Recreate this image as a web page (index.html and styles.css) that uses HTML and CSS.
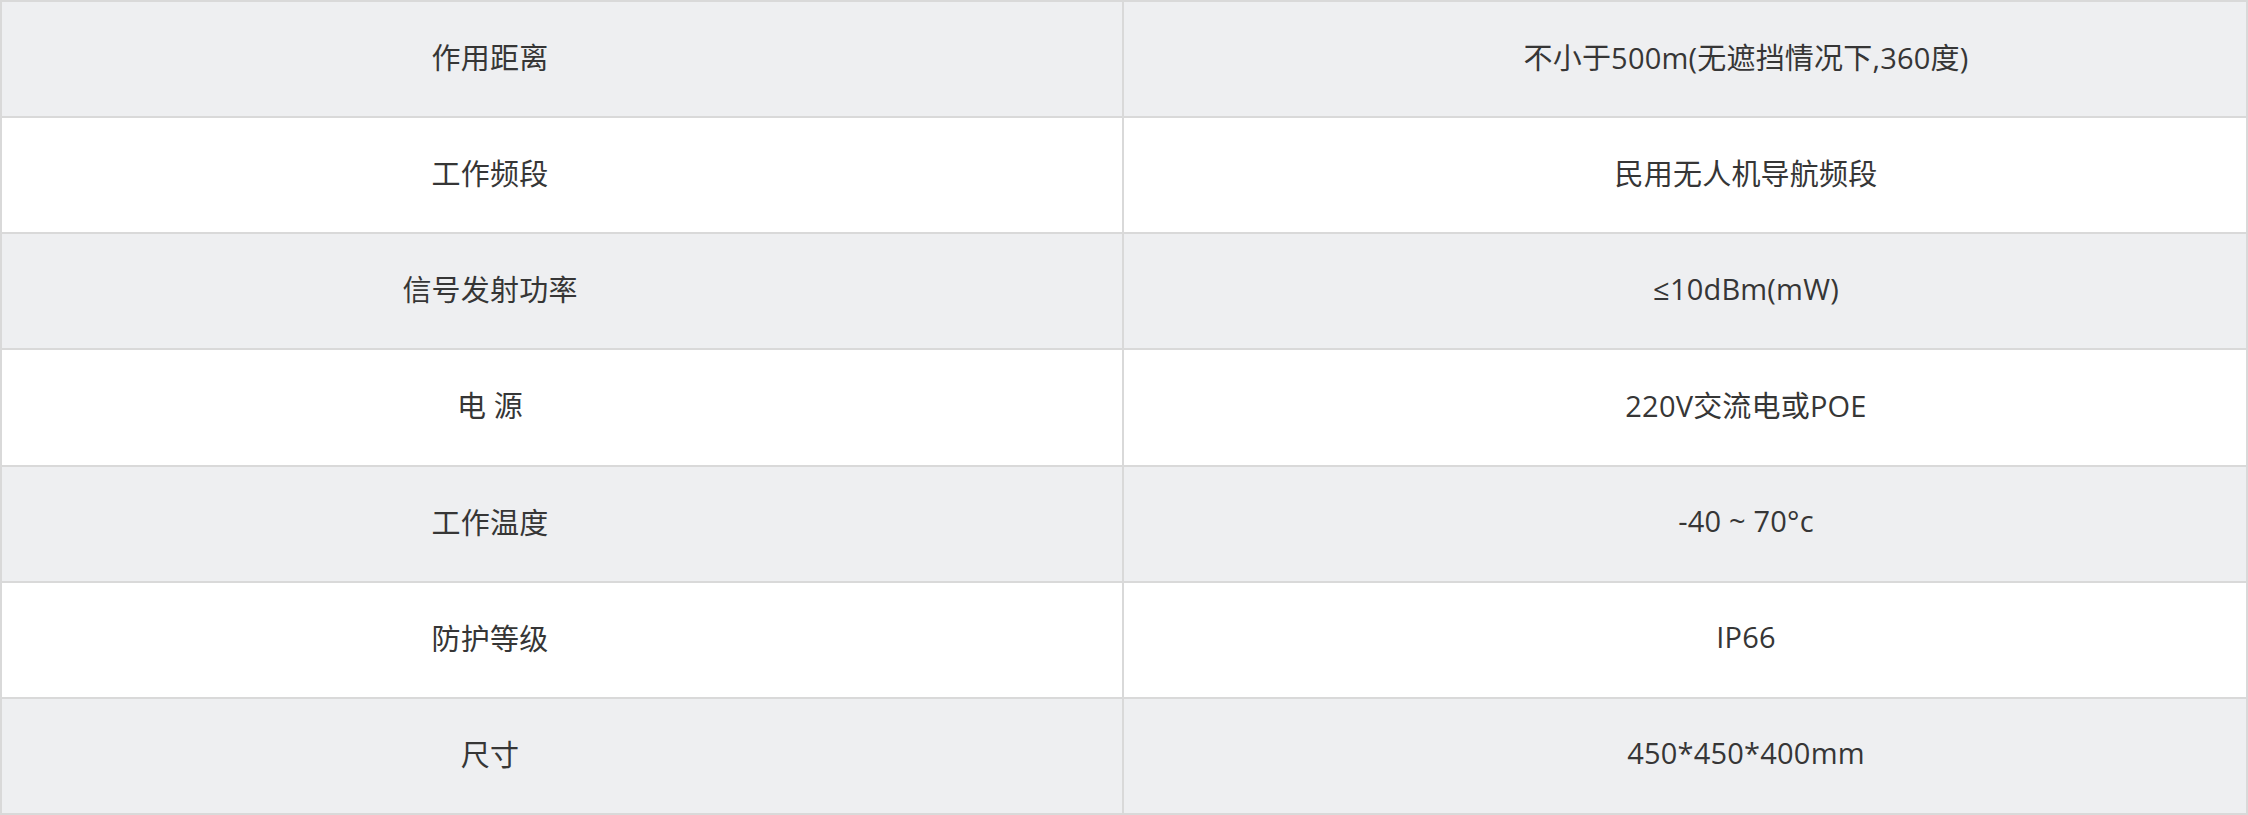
FILE: index.html
```html
<!DOCTYPE html>
<html lang="zh-CN">
<head>
<meta charset="utf-8">
<title>参数</title>
<link rel="stylesheet" href="styles.css">
</head>
<body>
<div class="spec">
  <div class="cell key odd">作用距离</div>
  <div class="cell val odd">不小于500m(无遮挡情况下,360度)</div>
  <div class="cell key">工作频段</div>
  <div class="cell val">民用无人机导航频段</div>
  <div class="cell key odd">信号发射功率</div>
  <div class="cell val odd">≤10dBm(mW)</div>
  <div class="cell key">电 源</div>
  <div class="cell val">220V交流电或POE</div>
  <div class="cell key odd">工作温度</div>
  <div class="cell val odd">-40 ~ 70°c</div>
  <div class="cell key">防护等级</div>
  <div class="cell val">IP66</div>
  <div class="cell key odd">尺寸</div>
  <div class="cell val odd">450*450*400mm</div>
</div>
</body>
</html>
```

FILE: styles.css
```css
html, body {
  margin: 0;
  padding: 0;
  background: #ffffff;
}

.spec {
  box-sizing: border-box;
  width: 2248px;
  height: 815px;
  padding: 2px;
  display: grid;
  grid-template-columns: 1120px 1fr;
  grid-template-rows: repeat(7, 1fr);
  gap: 2px;
  background: #d9d9d9;
  font-family: "Open Sans", "Noto Sans CJK SC", sans-serif;
  font-size: 29px;
  color: #363636;
}

.cell {
  display: flex;
  align-items: center;
  justify-content: center;
  padding-bottom: 6px;
  background: #ffffff;
  white-space: pre;
  letter-spacing: 0.2px;
}

.cell.odd {
  background: #eeeff1;
}

.key {
  padding-right: 144px;
}

.val {
  padding-left: 122px;
}
```
